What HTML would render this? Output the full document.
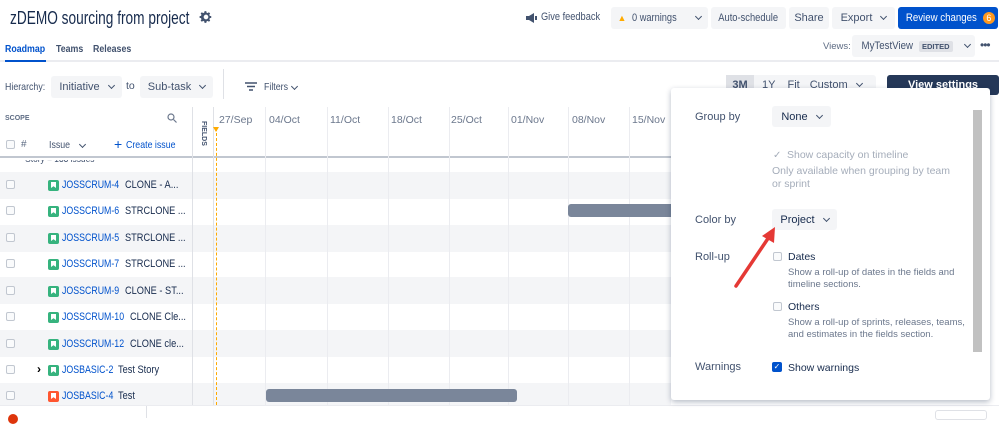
<!DOCTYPE html>
<html><head><meta charset="utf-8"><style>
*{box-sizing:border-box;margin:0;padding:0}
body{width:999px;height:418px;overflow:hidden;background:#fff;font-family:"Liberation Sans",sans-serif;color:#172b4d;position:relative;font-size:11px}
.a{position:absolute;white-space:nowrap}
.n{transform:scaleX(.84);transform-origin:left top}
.btn{position:absolute;background:#f4f5f7;border-radius:3px;color:#42526e;font-size:11px;display:flex;align-items:center;justify-content:center;height:22px;white-space:nowrap}
.chev{display:inline-block;width:5px;height:5px;border-right:1.5px solid #42526e;border-bottom:1.5px solid #42526e;transform:rotate(45deg);margin-left:9px;margin-top:-3px}
.row{position:absolute;left:0;width:671px;height:26.5px}
.g{background:#f4f5f7}
.cb{position:absolute;left:6px;width:9px;height:9px;border:1px solid #c1c7d0;border-radius:2px;background:#fafbfc}
.ic{position:absolute;left:48px;width:11px;height:11px;background:#36b37e;border-radius:2px}
.ic:after{content:"";position:absolute;left:3px;top:2px;width:5px;height:6px;background:#fff;clip-path:polygon(0 0,100% 0,100% 100%,50% 70%,0 100%)}
.key{position:absolute;left:62px;color:#0052cc;font-size:11px;transform:scaleX(.8);transform-origin:left top;white-space:nowrap}
.sum{position:absolute;color:#172b4d;font-size:11px;transform:scaleX(.84);transform-origin:left top;white-space:nowrap}
.vl{position:absolute;top:107px;width:1px;height:298px;background:#ebecf0}
</style></head><body>
<div class="a" style="left:10px;top:8px;font-size:18px;color:#172b4d;transform:scaleX(.76);transform-origin:left top">zDEMO sourcing from project</div>
<svg class="a" style="left:199px;top:10px" width="14" height="14" viewBox="0 0 24 24"><path fill="#42526e" fill-rule="evenodd" d="M12 8a4 4 0 100 8 4 4 0 000-8zm9 5.5v-3l-2.6-.5a7 7 0 00-.8-1.9l1.5-2.2-2.1-2.1-2.2 1.5a7 7 0 00-1.9-.8L12.5 2h-3l-.5 2.5a7 7 0 00-1.9.8L4.9 3.8 2.8 5.9l1.5 2.2a7 7 0 00-.8 1.9L1 10.5v3l2.5.5c.2.7.4 1.3.8 1.9l-1.5 2.2 2.1 2.1 2.2-1.5c.6.4 1.2.6 1.9.8l.5 2.5h3l.5-2.5c.7-.2 1.3-.4 1.9-.8l2.2 1.5 2.1-2.1-1.5-2.2c.4-.6.6-1.2.8-1.9z"/></svg>
<div class="a n" style="left:5px;top:43px;font-size:10.5px;font-weight:bold;color:#0052cc">Roadmap</div>
<div class="a n" style="left:56px;top:43px;font-size:10.5px;font-weight:bold;color:#42526e">Teams</div>
<div class="a n" style="left:93px;top:43px;font-size:10.5px;font-weight:bold;color:#42526e">Releases</div>
<div class="a" style="left:0;top:60px;width:999px;height:2px;background:#ebecf0"></div>
<div class="a" style="left:5px;top:60px;width:41px;height:2px;background:#0052cc"></div>
<!-- top right -->
<svg class="a" style="left:526px;top:13px" width="12" height="10" viewBox="0 0 12 10"><path fill="#42526e" d="M0 3h3l5-3v10L3 7H0z"/><rect x="9" y="3" width="2" height="4" fill="#42526e"/></svg>
<div class="a n" style="left:541px;top:11px;font-size:11px;color:#42526e">Give feedback</div>
<div class="btn" style="left:611px;top:7px;width:97px"><span style="color:#ffab00;margin-right:6px;font-size:9px">▲</span><span class="n" style="display:inline-block;width:55px">0 warnings</span><span class="chev"></span></div>
<div class="btn" style="left:711px;top:7px;width:75px"><span style="display:inline-block;transform:scaleX(.85)">Auto-schedule</span></div>
<div class="btn" style="left:789px;top:7px;width:40px">Share</div>
<div class="btn" style="left:832px;top:7px;width:63px">Export<span class="chev"></span></div>
<div class="btn" style="left:898px;top:7px;width:100px;background:#0052cc;color:#fff"><span style="display:inline-block;transform:scaleX(.88)">Review changes</span><span style="display:inline-block;width:12px;height:12px;border-radius:6px;background:#ff991f;color:#fff;font-size:9px;text-align:center;line-height:12px;margin-left:1px">6</span></div>
<div class="a" style="left:823px;top:41px;font-size:9.5px;color:#5e6c84">Views:</div>
<div class="btn" style="left:852px;top:35px;width:123px;color:#42526e"><span style="display:inline-block;transform:scaleX(.88)">MyTestView</span><span style="background:#dfe1e6;font-size:7.5px;font-weight:bold;padding:1px 3px;margin-left:3px;border-radius:2px">EDITED</span><span class="chev" style="margin-left:12px"></span></div>
<div class="a" style="left:980px;top:38px;font-size:12px;color:#42526e;letter-spacing:-1px">•••</div>
<!-- toolbar -->
<div class="a n" style="left:5px;top:81px;font-size:10.5px;color:#42526e">Hierarchy:</div>
<div class="btn" style="left:51px;top:76px;width:71px">Initiative<span class="chev"></span></div>
<div class="a" style="left:126px;top:80px;font-size:10.5px;color:#42526e">to</div>
<div class="btn" style="left:140px;top:76px;width:73px">Sub-task<span class="chev"></span></div>
<div class="a" style="left:223px;top:69px;width:1px;height:30px;background:#dfe1e6"></div>
<svg class="a" style="left:245px;top:82px" width="12" height="9"><path d="M0 1h12M2 4.5h8M4 8h4" stroke="#42526e" stroke-width="1.5"/></svg>
<div class="a n" style="left:264px;top:81px;font-size:10.5px;color:#42526e">Filters</div><span class="chev a" style="left:292px;top:84px;margin:0"></span>
<div class="btn" style="left:726px;top:75px;width:150px;justify-content:flex-start;height:20px"><span style="background:#dfe1e6;height:20px;width:28px;display:flex;align-items:center;justify-content:center;font-weight:bold">3M</span><span style="margin-left:8px">1Y</span><span style="margin-left:12px">Fit</span><span style="margin-left:10px">Custom</span><span class="chev"></span></div>
<div class="btn" style="left:887px;top:75px;width:112px;height:20px;background:#253858;color:#fff;font-weight:bold">View settings</div>
<!-- scope header -->
<div class="a" style="left:5px;top:115px;font-size:7px;font-weight:bold;color:#5e6c84">SCOPE</div>
<svg class="a" style="left:167px;top:113px" width="10" height="10"><circle cx="4" cy="4" r="3" stroke="#6b778c" fill="none" stroke-width="1.2"/><path d="M6.5 6.5L9.5 9.5" stroke="#6b778c" stroke-width="1.2"/></svg>
<div class="cb" style="top:140px"></div>
<div class="a" style="left:21px;top:139px;font-size:10px;color:#5e6c84">#</div>
<div class="a n" style="left:49px;top:139px;font-size:10.5px;color:#42526e">Issue</div><span class="chev a" style="left:80px;top:142px;margin:0"></span>
<div class="a" style="left:114px;top:136px;font-size:14px;color:#0052cc">+</div><div class="a n" style="left:126px;top:139px;font-size:10.5px;color:#0052cc">Create issue</div>
<div class="a" style="left:200px;top:121px;font-size:7px;font-weight:bold;color:#42526e;writing-mode:vertical-rl">FIELDS</div>
<!-- rows -->
<div class="row" style="top:160px;height:12px;overflow:hidden"><div class="a n" style="left:20px;top:-6px;font-size:10px;color:#42526e">· Story = 133 issues</div></div>
<div class="row g" style="top:172px"></div>
<div class="row g" style="top:225px"></div>
<div class="row g" style="top:277px"></div>
<div class="row g" style="top:330px"></div>
<div class="row g" style="top:383px;height:22px"></div>
<div class="a" style="left:0;top:156px;width:671px;height:2px;background:#c1c7d0"></div>
<div class="a" style="left:192px;top:107px;width:1px;height:298px;background:#dfe1e6"></div>
<div class="a" style="left:213px;top:107px;width:1px;height:298px;background:#dfe1e6"></div>
<div class="vl" style="left:265px"></div><div class="vl" style="left:327px"></div><div class="vl" style="left:388px"></div><div class="vl" style="left:449px"></div><div class="vl" style="left:508px"></div><div class="vl" style="left:568px"></div><div class="vl" style="left:629px"></div>
<div class="a" style="left:216px;top:128px;width:0;height:277px;border-left:1px dashed #ffab00"></div>
<div class="a" style="left:213px;top:127px;width:0;height:0;border:3.5px solid transparent;border-top:5px solid #ffab00"></div>
<div class="a" style="top:114px;left:219px;font-size:10.5px;color:#6b778c">27/Sep</div>
<div class="a" style="top:114px;left:269px;font-size:10.5px;color:#6b778c">04/Oct</div>
<div class="a" style="top:114px;left:330px;font-size:10.5px;color:#6b778c">11/Oct</div>
<div class="a" style="top:114px;left:391px;font-size:10.5px;color:#6b778c">18/Oct</div>
<div class="a" style="top:114px;left:451px;font-size:10.5px;color:#6b778c">25/Oct</div>
<div class="a" style="top:114px;left:511px;font-size:10.5px;color:#6b778c">01/Nov</div>
<div class="a" style="top:114px;left:572px;font-size:10.5px;color:#6b778c">08/Nov</div>
<div class="a" style="top:114px;left:632px;font-size:10.5px;color:#6b778c">15/Nov</div>

<div class="cb" style="top:180px"></div><div class="ic" style="top:180px"></div><div class="key" style="top:179px">JOSSCRUM-4</div><div class="sum" style="left:125px;top:179px">CLONE - A...</div>
<div class="cb" style="top:206px"></div><div class="ic" style="top:206px"></div><div class="key" style="top:205px">JOSSCRUM-6</div><div class="sum" style="left:125px;top:205px">STRCLONE ...</div>
<div class="cb" style="top:233px"></div><div class="ic" style="top:233px"></div><div class="key" style="top:232px">JOSSCRUM-5</div><div class="sum" style="left:125px;top:232px">STRCLONE ...</div>
<div class="cb" style="top:259px"></div><div class="ic" style="top:259px"></div><div class="key" style="top:258px">JOSSCRUM-7</div><div class="sum" style="left:125px;top:258px">STRCLONE ...</div>
<div class="cb" style="top:286px"></div><div class="ic" style="top:286px"></div><div class="key" style="top:285px">JOSSCRUM-9</div><div class="sum" style="left:125px;top:285px">CLONE - ST...</div>
<div class="cb" style="top:312px"></div><div class="ic" style="top:312px"></div><div class="key" style="top:311px">JOSSCRUM-10</div><div class="sum" style="left:130px;top:311px">CLONE Cle...</div>
<div class="cb" style="top:339px"></div><div class="ic" style="top:339px"></div><div class="key" style="top:338px">JOSSCRUM-12</div><div class="sum" style="left:130px;top:338px">CLONE cle...</div>
<div class="cb" style="top:365px"></div><div class="a" style="left:37px;top:362px;font-size:12px;font-weight:bold;color:#000">›</div><div class="ic" style="top:365px"></div><div class="key" style="top:364px">JOSBASIC-2</div><div class="sum" style="left:118px;top:364px">Test Story</div>
<div class="cb" style="top:391px"></div><div class="ic" style="top:391px;background:#ff5630"></div><div class="key" style="top:390px">JOSBASIC-4</div><div class="sum" style="left:118px;top:390px">Test</div>
<div class="a" style="left:568px;top:204px;width:103px;height:13px;background:#7a869a;border-radius:3px 0 0 3px"></div>
<div class="a" style="left:266px;top:389px;width:251px;height:13px;background:#7a869a;border-radius:3px"></div>
<!-- bottom bar -->
<div class="a" style="left:0;top:405px;width:999px;height:13px;background:#fff;border-top:1px solid #ebecf0"></div>
<div class="a" style="left:8px;top:414px;width:10px;height:10px;border-radius:5px;background:#de350b"></div>
<div class="a" style="left:146px;top:406px;width:1px;height:12px;background:#dfe1e6"></div>
<div class="a" style="left:935px;top:410px;width:52px;height:10px;border:1px solid #dfe1e6;border-radius:3px"></div>
<!-- panel -->
<div class="a" style="left:671px;top:88px;width:319px;height:312px;background:#fff;box-shadow:0 2px 6px rgba(9,30,66,.3);border-radius:3px"></div>
<div class="a" style="left:973px;top:110px;width:9px;height:242px;background:#c1c1c1"></div>
<div class="a" style="left:695px;top:111px;font-size:11px;color:#42526e">Group by</div>
<div class="btn" style="left:772px;top:106px;width:59px;height:21px;color:#172b4d">None<span class="chev"></span></div>
<div class="a" style="left:773px;top:150px;font-size:10px;color:#a5adba">✓</div>
<div class="a" style="left:787px;top:149px;font-size:10.5px;color:#a5adba">Show capacity on timeline</div>
<div class="a" style="left:772px;top:165px;font-size:10.5px;color:#a5adba;line-height:13px;width:190px;white-space:normal">Only available when grouping by team or sprint</div>
<div class="a" style="left:695px;top:214px;font-size:11px;color:#42526e">Color by</div>
<div class="btn" style="left:772px;top:209px;width:65px;height:21px;color:#172b4d">Project<span class="chev"></span></div>
<div class="a" style="left:695px;top:251px;font-size:11px;color:#42526e">Roll-up</div>
<div class="cb" style="left:773px;top:252px"></div>
<div class="a" style="left:788px;top:251px;font-size:10.5px;color:#172b4d">Dates</div>
<div class="a" style="left:788px;top:267px;font-size:9.5px;color:#6b778c;line-height:12px;width:190px;white-space:normal">Show a roll-up of dates in the fields and timeline sections.</div>
<div class="cb" style="left:773px;top:302px"></div>
<div class="a" style="left:788px;top:301px;font-size:10.5px;color:#172b4d">Others</div>
<div class="a" style="left:788px;top:317px;font-size:9.5px;color:#6b778c;line-height:12px;width:185px;white-space:normal">Show a roll-up of sprints, releases, teams, and estimates in the fields section.</div>
<div class="a" style="left:695px;top:361px;font-size:11px;color:#42526e">Warnings</div>
<div class="a" style="left:772px;top:362px;width:10px;height:10px;background:#0052cc;border-radius:2px;color:#fff;font-size:8px;text-align:center;line-height:10px">✓</div>
<div class="a" style="left:788px;top:362px;font-size:10.5px;color:#172b4d">Show warnings</div>
<svg class="a" style="left:733px;top:224px" width="45" height="66"><path d="M3 62L38 10" stroke="#e53935" stroke-width="3.5" stroke-linecap="round"/><path d="M42 3L29 12L41 19Z" fill="#e53935"/></svg>
</body></html>
